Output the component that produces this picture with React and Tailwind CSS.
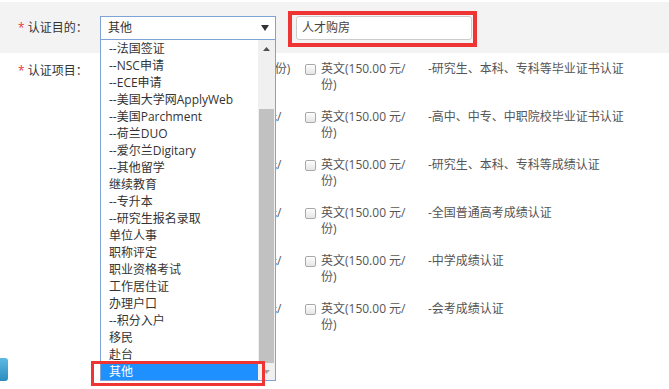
import React from "react";

const options = [
  "--法国签证",
  "--NSC申请",
  "--ECE申请",
  "--美国大学网ApplyWeb",
  "--美国Parchment",
  "--荷兰DUO",
  "--爱尔兰Digitary",
  "--其他留学",
  "继续教育",
  "--专升本",
  "--研究生报名录取",
  "单位人事",
  "职称评定",
  "职业资格考试",
  "工作居住证",
  "办理户口",
  "--积分入户",
  "移民",
  "赴台",
  "其他",
];

const rows = [
  { cn: ["中文(50.00 元/份)"], desc: "-研究生、本科、专科等毕业证书认证" },
  { cn: ["中文(150.00 元/", "份)"], desc: "-高中、中专、中职院校毕业证书认证" },
  { cn: ["中文(150.00 元/", "份)"], desc: "-研究生、本科、专科等成绩认证" },
  { cn: ["中文(150.00 元/", "份)"], desc: "-全国普通高考成绩认证" },
  { cn: ["中文(150.00 元/", "份)"], desc: "-中学成绩认证" },
  { cn: ["中文(150.00 元/", "份)"], desc: "-会考成绩认证" },
];

function Checkbox() {
  return (
    <span className="mt-[3px] block h-[11px] w-[11px] shrink-0 rounded-[2px] border border-[#a9a9a9] bg-gradient-to-b from-[#fdfdfd] to-[#e6e6e6]" />
  );
}

function Dropdown() {
  return (
    <div className="absolute left-[100px] top-[39px] flex h-[342px] w-[176px] border border-[#7fa3d6] bg-white">
      {/* options */}
      <ul className="w-[157px]">
        {options.map((opt, i) => (
          <li
            key={i}
            className={
              "h-[17px] pl-[8px] text-[12px] leading-[17px] " +
              (i === options.length - 1 ? "bg-[#1e90ff] text-white" : "text-[#333]")
            }
          >
            {opt}
          </li>
        ))}
      </ul>

      {/* scrollbar */}
      <div className="flex w-[17px] flex-col bg-[#f0f0f0]">
        <div className="flex h-[17px] items-center justify-center">
          <svg width="7" height="4" viewBox="0 0 7 4">
            <path d="M0 4 L3.5 0 L7 4 Z" fill="#505050" />
          </svg>
        </div>
        <div className="h-[52px]" />
        <div className="mx-[1px] flex-1 bg-[#c1c1c1]" />
        <div className="flex h-[17px] items-center justify-center">
          <svg width="7" height="4" viewBox="0 0 7 4">
            <path d="M0 0 L3.5 4 L7 0 Z" fill="#a3a3a3" />
          </svg>
        </div>
      </div>
    </div>
  );
}

export default function App() {
  return (
    <div className="relative h-[389px] w-full overflow-hidden bg-white pt-[2px] font-['Open_Sans','Noto_Sans_CJK_SC',sans-serif] text-[12px] text-[#333]">
      {/* 认证目的 */}
      <div className="flex h-[51px] items-start bg-[#f3f3f3]">
        <div className="mt-[18px] w-[100px] pl-[18px] leading-[16px]">
          <span className="text-[#e4393c]">*</span> 认证目的：
        </div>
        <div className="mt-[14px] flex h-[24px] w-[176px] items-center justify-between border border-[#7fa3d6] bg-white pl-[7px] pr-[6px]">
          <span>其他</span>
          <svg width="8" height="6" viewBox="0 0 8 6">
            <path d="M0 0 L8 0 L4 6 Z" fill="#333" />
          </svg>
        </div>
        <div className="ml-[12px] mt-[9px] border-4 border-[#ef3434] pb-[3px] pl-[4px] pr-[1px] pt-[1px]">
          <div className="flex h-[24px] w-[176px] items-center rounded-[3px] border border-[#cccccc] bg-white pl-[5px] text-[#444]">
            人才购房
          </div>
        </div>
      </div>

      {/* 认证项目 */}
      <div className="flex">
        <div className="mt-[10px] w-[100px] pl-[18px] leading-[16px]">
          <span className="text-[#e4393c]">*</span> 认证项目：
        </div>
        <div className="flex flex-col pt-[8px] text-[#555] leading-[16px]">
          {rows.map((r, i) => (
            <div key={i} className="flex h-[48px]">
              <div className="flex w-[205px] gap-[5px] pl-[81px]">
                <Checkbox />
                <div className="whitespace-nowrap">
                  {r.cn.map((l, j) => (
                    <div key={j}>{l}</div>
                  ))}
                </div>
              </div>
              <div className="flex w-[123px] gap-[5px]">
                <Checkbox />
                <div className="whitespace-nowrap">
                  <div>英文(150.00 元/</div>
                  <div>份)</div>
                </div>
              </div>
              <div className="whitespace-nowrap">{r.desc}</div>
            </div>
          ))}
          <div className="ml-[-100px] mt-[9px] h-[23px] w-[8px] rounded-r-[3px] bg-gradient-to-b from-[#5cb9e2] to-[#2a8cbf]" />
        </div>
      </div>

      <Dropdown />

      {/* highlight annotation around selected option */}
      <div className="absolute left-[91px] top-[361px] h-[25px] w-[174px] border-[3px] border-[#ef3434]" />
    </div>
  );
}
